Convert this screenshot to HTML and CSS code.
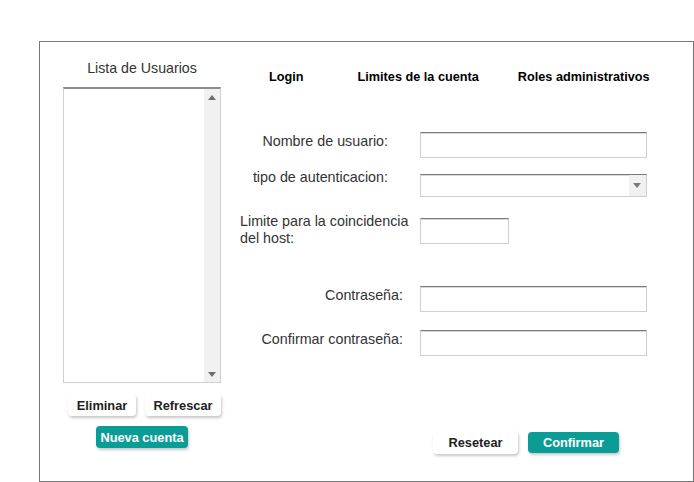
FILE: index.html
```html
<!DOCTYPE html>
<html lang="es">
<head>
<meta charset="utf-8">
<title>Usuarios</title>
<link rel="stylesheet" href="styles.css">
</head>
<body>
<div class="frame">
  <div class="left">
    <div class="list-title">Lista de Usuarios</div>
    <div class="listbox">
      <div class="list-area"></div>
      <div class="scrollbar">
        <span class="arrow-up"></span>
        <span class="arrow-down"></span>
      </div>
    </div>
    <div class="list-actions">
      <button class="btn btn-white btn-elim">Eliminar</button>
      <button class="btn btn-white btn-refr">Refrescar</button>
    </div>
    <button class="btn btn-teal btn-nueva">Nueva cuenta</button>
  </div>
  <div class="right">
    <div class="tabs">
      <span class="tab tab-login">Login</span>
      <span class="tab tab-limites">Limites de la cuenta</span>
      <span class="tab tab-roles">Roles administrativos</span>
    </div>
    <div class="row row1">
      <label class="lbl lbl-a">Nombre de usuario:</label>
      <div class="field field-wide"></div>
    </div>
    <div class="row row2">
      <label class="lbl lbl-a lbl-up">tipo de autenticacion:</label>
      <div class="field field-wide select"><span class="sel-btn"><span class="arrow-down"></span></span></div>
    </div>
    <div class="row row3">
      <label class="lbl lbl-host">Limite para la coincidencia<br>del host:</label>
      <div class="field field-short"></div>
    </div>
    <div class="row row4">
      <label class="lbl lbl-b">Contraseña:</label>
      <div class="field field-wide"></div>
    </div>
    <div class="row row5">
      <label class="lbl lbl-b">Confirmar contraseña:</label>
      <div class="field field-wide"></div>
    </div>
    <div class="form-actions">
      <button class="btn btn-white btn-reset">Resetear</button>
      <button class="btn btn-teal btn-conf">Confirmar</button>
    </div>
  </div>
</div>
</body>
</html>
```
FILE: styles.css
```css
* { box-sizing: border-box; }
html, body { margin: 0; padding: 0; background: #fff; }
body {
  font-family: "Liberation Sans", Arial, sans-serif;
  color: #333;
}
.frame {
  margin: 41px 0 0 39px;
  width: 655px;
  height: 441px;
  border: 1px solid #767676;
  display: flex;
  align-items: flex-start;
}
.left {
  width: 158px;
  margin-left: 23px;
  padding-top: 18px;
  display: flex;
  flex-direction: column;
}
.list-title {
  font-size: 14.2px;
  line-height: 16px;
  text-align: center;
  color: #333;
}
.listbox {
  margin-top: 11px;
  height: 296px;
  border: 1px solid #cfcfcf;
  border-top: 2px solid #8c8c8c;
  display: flex;
}
.list-area { flex: 1; }
.scrollbar {
  width: 16px;
  background: #f1f1f1;
  position: relative;
}
.arrow-up, .arrow-down {
  position: absolute;
  left: 4px;
  width: 0; height: 0;
  border-left: 4px solid transparent;
  border-right: 4px solid transparent;
}
.arrow-up { top: 6px; border-bottom: 5px solid #6d6d6d; }
.scrollbar .arrow-down { bottom: 5px; border-top: 5px solid #6d6d6d; }
.list-actions {
  margin-top: 11px;
  display: flex;
  gap: 9px;
  padding-left: 5px;
}
.btn {
  font-family: "Liberation Sans", Arial, sans-serif;
  font-weight: bold;
  font-size: 12.8px;
  border: none;
  border-radius: 4px;
  height: 22px;
  padding: 0;
  cursor: pointer;
}
.btn-white {
  background: #fff;
  color: #222;
  box-shadow: 1px 2px 3px rgba(0,0,0,0.22);
}
.btn-teal {
  background: #0c9c96;
  color: #fff;
  box-shadow: 1px 2px 3px rgba(0,0,0,0.22);
}
.btn-elim { width: 68px; }
.btn-refr { width: 76px; }
.btn-nueva { width: 92px; margin-top: 10px; margin-left: 33px; }
.right {
  margin-left: 19px;
  width: 420px;
  padding-top: 27px;
}
.tabs {
  display: flex;
  font-size: 12.7px;
  font-weight: bold;
  line-height: 16px;
  color: #000;
}
.tab-login { margin-left: 29px; }
.tab-limites { margin-left: 54px; }
.tab-roles { margin-left: 39px; }
.row {
  display: flex;
  align-items: flex-start;
}
.lbl {
  width: 168px;
  flex: none;
  font-size: 14.3px;
  line-height: 16px;
  color: #333;
  text-align: right;
  margin-right: 12px;
  white-space: nowrap;
}
.lbl-a { padding-right: 20px; margin-top: 1px; }
.lbl-up { margin-top: -5px; }
.lbl-b { padding-right: 5px; margin-top: 1px; }
.lbl-host { text-align: left; line-height: 17px; margin-top: -5px; }
.field {
  height: 26px;
  border: 1px solid #cfcfcf;
  border-top: 1px solid #7a7a7a;
  box-shadow: inset 0 1px 0 #d8d8d8;
  background: #fff;
}
.field-wide { width: 227px; }
.field-short { width: 89px; }
.row1 { margin-top: 47px; }
.row2 { margin-top: 16px; }
.select { height: 23px; position: relative; }
.sel-btn {
  position: absolute;
  right: 0; top: 0; bottom: 0;
  width: 17px;
  background: #f1f1f1;
}
.sel-btn .arrow-down { top: 8px; border-top: 5px solid #7a7a7a; }
.row3 { margin-top: 21px; }
.row4 { margin-top: 39px; }
.row5 { margin-top: 18px; }
.form-actions {
  margin-top: 75px;
  display: flex;
  align-items: flex-start;
  padding-left: 193px;
  gap: 10px;
}
.btn-reset { width: 85px; height: 23px; }
.btn-conf { width: 91px; height: 21px; margin-top: 1px; }
```
